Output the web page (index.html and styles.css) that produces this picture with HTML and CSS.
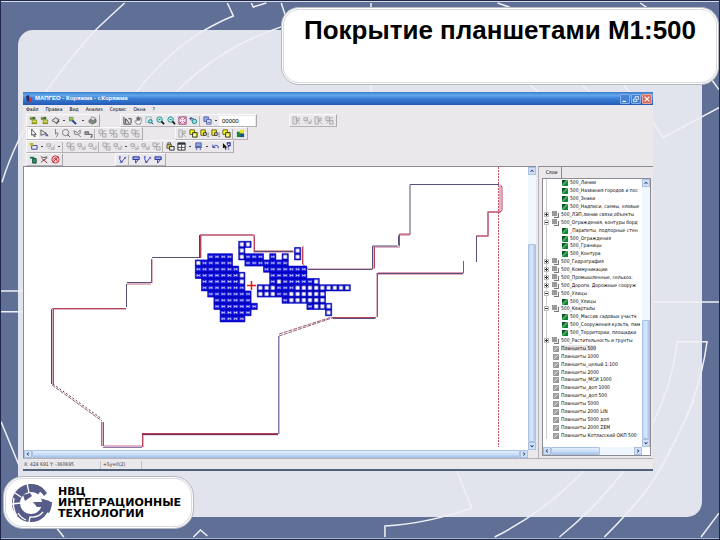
FILE: index.html
```html
<!DOCTYPE html>
<html lang="ru">
<head>
<meta charset="utf-8">
<title>Покрытие планшетами М1:500</title>
<link rel="stylesheet" href="styles.css">
</head>
<body>
<svg width="0" height="0" class="defs" aria-hidden="true">
  <symbol id="i-layers" viewBox="0 0 10 10"><path d="M1 1h6v3H1z" fill="#3f6b32"/><path d="M3 4h6v5H3z" fill="#8a9a1c"/><path d="M4 5h4v2H4z" fill="#e4e07a"/><path d="M1 2h3" stroke="#c9d44a"/></symbol>
  <symbol id="i-box" viewBox="0 0 10 10"><path d="M1 5l4-3 4 2-3 4z" fill="#ddd" stroke="#555"/><path d="M6 8l3-4v2L6 9.500z" fill="#444"/></symbol>
  <symbol id="i-find" viewBox="0 0 10 10"><path d="M1 1h5v5H1z" fill="#6aa05c"/><path d="M2 3h3" stroke="#e4df50"/><path d="M5 5l4 4" stroke="#223a9a" stroke-width="2"/></symbol>
  <symbol id="i-print" viewBox="0 0 10 10"><path d="M1 5l4-3 4 2v3L5 9 1 7z" fill="#888" stroke="#444" stroke-width=".6"/><path d="M4 1l4 1-1 3-4-1z" fill="#eee" stroke="#555" stroke-width=".6"/><path d="M6 7h2" stroke="#3b9a3b"/></symbol>
  <symbol id="i-axis" viewBox="0 0 10 10"><path d="M1 1v8h8M3 8V3l4 5M6 3h3v5" fill="none" stroke="#333"/></symbol>
  <symbol id="i-hand" viewBox="0 0 10 10"><path d="M3 9L1 6l1-1 1 1V2h1v3-4h1v4-3.500h1V5l1-3h1v4L7 9z" fill="#fff" stroke="#555" stroke-width=".7"/></symbol>
  <symbol id="i-zoom" viewBox="0 0 10 10"><circle cx="4" cy="4" r="3" fill="#b9f0ee" stroke="#168a8a"/><path d="M6 6l3 3" stroke="#111" stroke-width="1.700"/><path d="M3 4h2" stroke="#065"/></symbol>
  <symbol id="i-zoomrect" viewBox="0 0 10 10"><path d="M1 1h6v6H1z" fill="none" stroke="#3a9a9a" stroke-dasharray="1 1"/><circle cx="6" cy="6" r="2" fill="#8fe3e0" stroke="#177"/><path d="M7 7l2 2" stroke="#333"/></symbol>
  <symbol id="i-fit" viewBox="0 0 10 10"><path d="M1 1h8v8H1z" fill="#f7e7f7" stroke="#8a2a6a"/><path d="M2 2l2 2M8 2L6 4M2 8l2-2M8 8L6 6" stroke="#b02a4a"/></symbol>
  <symbol id="i-back" viewBox="0 0 10 10"><path d="M1 3h4M1 3l2-2M1 3l2 2" stroke="#238"/><circle cx="6" cy="6" r="2.500" fill="#8fe3e0" stroke="#177"/></symbol>
  <symbol id="i-sheets" viewBox="0 0 10 10"><path d="M1 1h5v5H1z" fill="#9bb0e6" stroke="#4559a0"/><path d="M4 4h5v5H4z" fill="#dfe6fa" stroke="#4559a0"/><path d="M5 7h3" stroke="#4559a0"/></symbol>
  <symbol id="i-gray" viewBox="0 0 10 10"><path d="M1 1h4v8H1zM4 4l4-2v3H5l4 4" fill="#ddd" stroke="#aaa"/></symbol>
  <symbol id="i-grayx" viewBox="0 0 10 10"><path d="M1 1h4v4H1zM5 5h4v4H5zM2 8l5-6M6 2h3" fill="#dddbdd" stroke="#aaa"/></symbol>
  <symbol id="i-grayn" viewBox="0 0 10 10"><path d="M1 2h4v3H1zM4 4l4 4M5 8h4V4M2 7h2" fill="#dddbdd" stroke="#aaa"/></symbol>
  <symbol id="i-cursor" viewBox="0 0 10 10"><path d="M3 0v7l2-1 1 3 1-1-1-2h2z" fill="#fff" stroke="#222" stroke-width=".8"/></symbol>
  <symbol id="i-poly" viewBox="0 0 10 10"><path d="M1 1v6l6-2zM6 4l3 4" fill="none" stroke="#555"/><path d="M6 6h3v2H6z" fill="#5364b5"/></symbol>
  <symbol id="i-pick" viewBox="0 0 10 10"><path d="M5 0v6M5 4l3 1-2 4" fill="none" stroke="#777"/></symbol>
  <symbol id="i-lens" viewBox="0 0 10 10"><circle cx="4" cy="4" r="3.500" fill="none" stroke="#777"/><path d="M6 6l3 3" stroke="#555"/></symbol>
  <symbol id="i-lasso" viewBox="0 0 10 10"><path d="M1 2l4 2 3-3v4l-3 1 4 3M1 2l1 4h3" fill="none" stroke="#777"/></symbol>
  <symbol id="i-rect" viewBox="0 0 10 10"><path d="M1 3h4v3H1z" fill="#999" stroke="#666"/><path d="M5 6h4v3H7" fill="none" stroke="#444"/></symbol>
  <symbol id="i-yellow" viewBox="0 0 10 10"><path d="M1 1h5v5H1z" fill="#ffff20" stroke="#5a5a10"/><path d="M4 4h5v5H4z" fill="#f0ee20" stroke="#222"/><path d="M5 6h2v2H5z" fill="#fff"/></symbol>
  <symbol id="i-yellowdot" viewBox="0 0 10 10"><path d="M1 1h5v6H1z" fill="#f4f020" stroke="#5a5a10"/><path d="M4 4h3v3H4z" fill="#ddd" stroke="#333"/><path d="M9 4v5" stroke="#222" stroke-dasharray="1 1"/></symbol>
  <symbol id="i-green" viewBox="0 0 10 10"><path d="M1 3h6v6H1z" fill="#128a28"/><path d="M4 1h5v4H4z" fill="#e6e21c"/><path d="M5 5h4v4H5z" fill="#1c4a9a"/></symbol>
  <symbol id="i-new" viewBox="0 0 10 10"><path d="M3 4h6v4H3z" fill="#eee" stroke="#2a3c9a"/><path d="M1 1h4v3H1z" fill="#c8b820"/></symbol>
  <symbol id="i-lock" viewBox="0 0 10 10"><path d="M1 3h5v4H1z" fill="#d8cf3a" stroke="#555"/><path d="M4 5h5v4H4z" fill="#eee" stroke="#222"/><path d="M2 3V1h3v2" fill="none" stroke="#444"/></symbol>
  <symbol id="i-table" viewBox="0 0 10 10"><path d="M1 1h8v8H1z" fill="#fff" stroke="#222"/><path d="M1 2h8" stroke="#234" stroke-width="2"/><path d="M1 6h8M5 3v6" stroke="#445"/></symbol>
  <symbol id="i-board" viewBox="0 0 10 10"><path d="M2 1h6v4H2z" fill="#93a7dd" stroke="#4559a0"/><path d="M1 6h8M3 6v3M7 6v3" stroke="#4559a0"/></symbol>
  <symbol id="i-undo" viewBox="0 0 10 10"><path d="M2 6q3-4 6-1v2M2 3v3h3" fill="none" stroke="#2938a8"/></symbol>
  <symbol id="i-help" viewBox="0 0 10 10"><path d="M1 1v6l2-1 1 3 1-1-1-2h2z" fill="#111"/><path d="M6 3V1h3v3H7v2M7 8h1" fill="none" stroke="#1c2aa0" stroke-width="1.300"/></symbol>
  <symbol id="i-db" viewBox="0 0 10 10"><path d="M1 2h5v2H1z" fill="#157a5a"/><path d="M4 4h4v5H4z" fill="#22986c" stroke="#174a34"/></symbol>
  <symbol id="i-cut" viewBox="0 0 10 10"><path d="M1 2l3 1 4-1M1 8l7-5M5 6l3 3" fill="none" stroke="#444"/><path d="M2 4l5 4" stroke="#c02a3a"/></symbol>
  <symbol id="i-no" viewBox="0 0 10 10"><circle cx="5" cy="5" r="4" fill="#f4d4d4" stroke="#c8202c"/><path d="M2 8l6-6M3 5l2-2 2 4" fill="none" stroke="#c8202c"/></symbol>
  <symbol id="i-vec" viewBox="0 0 10 10"><path d="M2 2v3l2 3 3-4 2-1M2 8h3" fill="none" stroke="#2a34b0"/><path d="M1 1h2v2H1zM7 2h2v2H7z" fill="#6a74d8"/></symbol>
  <symbol id="i-vec2" viewBox="0 0 10 10"><path d="M1 2h7v3H1z" fill="#9fa7e8" stroke="#222c8a"/><path d="M4 5v4l4-5" fill="none" stroke="#2a34b0"/></symbol>
  <symbol id="i-up" viewBox="0 0 8 8"><path d="M2 5l2-2 2 2" fill="none" stroke="#33486e" stroke-width="1.400"/></symbol>
  <symbol id="i-down" viewBox="0 0 8 8"><path d="M2 3l2 2 2-2" fill="none" stroke="#33486e" stroke-width="1.400"/></symbol>
  <symbol id="i-left" viewBox="0 0 8 8"><path d="M5 2L3 4l2 2" fill="none" stroke="#33486e" stroke-width="1.400"/></symbol>
  <symbol id="i-right" viewBox="0 0 8 8"><path d="M3 2l2 2-2 2" fill="none" stroke="#33486e" stroke-width="1.400"/></symbol>
</svg>

<main class="slide">
  <section class="panel">
    <svg class="lines" viewBox="0 0 720 540" preserveAspectRatio="none" aria-hidden="true">
      <path d="M124 2Q100 24 93 31Q65 62 45 91Q30 113 18 139Q7 162 1 182M227 2l6 13Q220 20 201 31Q167 52 136 91M281 26Q220 46 175 92M251 2l2 4 13-4M281 2l4 12M371 2v5M371 80v12M498 2l14 5M641 2l7 5M530 84l10 8M582 84l9 8M624 84l7 8M712 78l8 11M652 119l12 18 56-30M652 302h68M653 425Q674 382 678 342H708Q704 372 694 400Q684 430 655 480M695 400Q674 450 653 483Q637 506 605 538M457 471l15 38Q425 525 385 527v11M585 471Q545 513 495 538M625 471Q596 509 560 538M720 514l-18 24M0 291h23M0 312h23M0 422l18 44M55 528l8 10M193 538l7-7 7 6"/>
    </svg>
    <article class="window">
      <header class="titlebar">
        <svg class="app-icon" viewBox="0 0 8 8" aria-hidden="true"><path d="M1 1l3-1v7L2 6z" fill="#26305c"/><path d="M4 2l3 1-1 4-2 1z" fill="#c8323a"/></svg>
        <h2>МАПГЕО - Коряжма - г.Коряжма</h2>
        <button class="caption" aria-label="Свернуть"><svg viewBox="0 0 10 10"><path d="M2 8h4" stroke="#fff" stroke-width="1.500"/></svg></button>
        <button class="caption" aria-label="Восстановить"><svg viewBox="0 0 10 10"><path d="M2 5h4v3H2zM4 4V2h4v4" fill="none" stroke="#fff"/></svg></button>
        <button class="caption close" aria-label="Закрыть"><svg viewBox="0 0 10 10"><path d="M2 2l6 6M8 2L2 8" stroke="#fff" stroke-width="1.500"/></svg></button>
      </header>
      <nav class="menu"><a href="#">Файл</a><a href="#">Правка</a><a href="#">Вид</a><a href="#">Анализ</a><a href="#">Сервис</a><a href="#">Окна</a><a href="#">?</a></nav>

      <div class="toolrow">
        <div class="tools">
          <button aria-label="Слои"><svg><use href="#i-layers"/></svg></button><button aria-label="Набор слоёв"><svg><use href="#i-layers"/></svg></button><button aria-label="Объект"><svg><use href="#i-box"/></svg></button><i class="drop"></i><button aria-label="Поиск"><svg><use href="#i-find"/></svg></button><i class="drop wide"></i><button aria-label="Печать"><svg><use href="#i-print"/></svg></button>
        </div>
        <div class="tools after-s">
          <button aria-label="Оси"><svg><use href="#i-axis"/></svg></button><button aria-label="Рука"><svg><use href="#i-hand"/></svg></button><button aria-label="Рамка"><svg><use href="#i-zoomrect"/></svg></button><button aria-label="Увеличить"><svg><use href="#i-zoom"/></svg></button><button aria-label="Уменьшить"><svg><use href="#i-zoom"/></svg></button><button aria-label="Вся карта"><svg><use href="#i-fit"/></svg></button><button aria-label="Назад"><svg><use href="#i-back"/></svg></button><i class="sep"></i><button aria-label="Листы"><svg><use href="#i-sheets"/></svg></button><i class="drop"></i><input class="code" aria-label="Код" value="00000">
        </div>
        <div class="tools after-m">
          <button aria-label="Узел"><svg><use href="#i-gray"/></svg></button><button aria-label="Линия"><svg><use href="#i-grayn"/></svg></button><button aria-label="Точка"><svg><use href="#i-gray"/></svg></button><button aria-label="Сетка"><svg><use href="#i-grayx"/></svg></button>
        </div>
      </div>
      <div class="toolrow">
        <div class="tools">
          <button class="on" aria-label="Курсор"><svg><use href="#i-cursor"/></svg></button><button aria-label="Полигон"><svg><use href="#i-poly"/></svg></button><button aria-label="Указать"><svg><use href="#i-pick"/></svg></button><button aria-label="Круг"><svg><use href="#i-lens"/></svg></button><button aria-label="Лассо"><svg><use href="#i-lasso"/></svg></button><button aria-label="Прямоугольник"><svg><use href="#i-rect"/></svg></button><i class="sep"></i><button aria-label="Вырезать"><svg><use href="#i-grayx"/></svg></button><button aria-label="Копировать"><svg><use href="#i-grayx"/></svg></button><button aria-label="Вставить"><svg><use href="#i-grayx"/></svg></button><button aria-label="Удалить"><svg><use href="#i-grayx"/></svg></button>
        </div>
        <div class="tools after-m">
          <button aria-label="Снять"><svg><use href="#i-gray"/></svg></button><button aria-label="Объединить"><svg><use href="#i-yellow"/></svg></button><button aria-label="Вычесть"><svg><use href="#i-yellowdot"/></svg></button><button aria-label="Пересечь"><svg><use href="#i-yellowdot"/></svg></button><button aria-label="Разделить"><svg><use href="#i-yellow"/></svg></button><i class="sep"></i><button aria-label="Карта"><svg><use href="#i-green"/></svg></button>
        </div>
      </div>
      <div class="toolrow">
        <div class="tools">
          <button aria-label="Создать"><svg><use href="#i-new"/></svg></button><i class="drop"></i><button aria-label="Правка"><svg><use href="#i-grayn"/></svg></button><i class="drop"></i><i class="sep"></i><button aria-label="Сдвиг"><svg><use href="#i-grayx"/></svg></button><button aria-label="Поворот"><svg><use href="#i-grayn"/></svg></button><button aria-label="Масштаб"><svg><use href="#i-grayn"/></svg></button><i class="sep"></i><button aria-label="Узлы"><svg><use href="#i-grayx"/></svg></button><button aria-label="Дуга"><svg><use href="#i-grayn"/></svg></button><i class="drop"></i><button aria-label="Точки"><svg><use href="#i-grayn"/></svg></button><button aria-label="Отрезки"><svg><use href="#i-grayn"/></svg></button><button aria-label="Связи"><svg><use href="#i-grayx"/></svg></button><i class="sep"></i><button aria-label="Блокировка"><svg><use href="#i-lock"/></svg></button><button aria-label="Таблица"><svg><use href="#i-table"/></svg></button><i class="drop"></i><button aria-label="Доска"><svg><use href="#i-board"/></svg></button><i class="drop"></i><button aria-label="Отменить"><svg><use href="#i-undo"/></svg></button><button aria-label="Справка"><svg><use href="#i-help"/></svg></button>
        </div>
      </div>
      <div class="toolrow">
        <div class="tools">
          <button aria-label="База"><svg><use href="#i-db"/></svg></button><button aria-label="Разрыв"><svg><use href="#i-cut"/></svg></button><button aria-label="Запрет"><svg><use href="#i-no"/></svg></button>
        </div>
        <div class="tools after-l">
          <button aria-label="Вектор"><svg><use href="#i-vec"/></svg></button><i class="sep"></i><button aria-label="Вектор слоя"><svg><use href="#i-vec2"/></svg></button><button aria-label="Вектор линии"><svg><use href="#i-vec"/></svg></button><button aria-label="Вектор области"><svg><use href="#i-vec2"/></svg></button>
        </div>
      </div>

      <div class="work">
        <div class="view">
          <svg class="map" viewBox="24 167 504 283" role="img" aria-label="Карта города">
            <defs>
              <pattern id="full" width="10" height="10" patternUnits="userSpaceOnUse"><path d="M0 0h10v10H0z" fill="#0808d8"/><path d="M3 3v4M7 3v4M3 5h4" stroke="#d0d0ff" stroke-width="1.500" fill="none"/></pattern>
              <pattern id="open" width="10" height="10" patternUnits="userSpaceOnUse"><path d="M0 0h10v10H0z" fill="#0808c8"/><path d="M2 2h6v6H2z" fill="#fbfbee"/></pattern>
            </defs>
            <g fill="none">
              <path stroke="#dfb4c4" stroke-width="2" d="M53 385V309H126M127 284h24M152 283v-24M201 258v-23h53v17h40M303 246v18M308 269h65M374 269v-22h25v-12h11M377 317V274h86M500 186v26h-12v24h-11M332 318h44M279 434V336M142 434.500h136M143 435v12M104 446h38M103 446V422"/>
              <path stroke="#b84058" d="M52.500 308.500H126M151.500 283v-24M200.500 258v-23h52q2 0 2 2v14h39M302.500 247v17l5 5M374.500 268v-21M399.500 246v-12h11M500 184.500q2 1 2 4v22l-2 1.500h-12v24h-12M463.500 261v12H378M377.500 273v44M332 317.500h44M53.500 309v75M142 433.500h136M142.500 435v12M103.500 422v24"/>
              <path stroke="#56507c" d="M126.500 284v23M127 282.500h24M152 257.500h48M308 269.500h64M372.500 269v-23h25M398.500 245v-9M410 234v-49.500h89M476.500 236v26M254 251.500h39M463 273.500h-86M375 318.500h-42"/>
              <path stroke="#713058" d="M51.500 309v75M199.500 258v-23M142 434.500h136"/>
              <path stroke="#8a78ae" d="M278.500 434V336M101.500 446V422M103 447.500h39"/>
              <path stroke="#986078" stroke-dasharray="4 1" d="M279 336l53-18M279 334l53-17M52 385l50 36"/>
              <path stroke="#553858" stroke-dasharray="2 2" d="M53 384l49 35"/>
              <path stroke="#c85068" stroke-dasharray="2 1" d="M498.500 167v280"/>
            </g>
            <g transform="translate(195.300 241.300) scale(.62)">
              <path fill="url(#full)" stroke="#0000b4" d="M20 20h40v10h-40zM80 20h30v10h-30zM120 20h10v10h-10zM10 30h50v10h-50zM80 30h70v10h-70zM0 40h70v10h-70zM110 40h70v10h-70zM0 50h70v10h-70zM120 50h60v10h-60zM10 60h60v10h-60zM120 60h70v10h-70zM10 70h70v10h-70zM130 70h30v10h-30zM20 80h70v10h-70zM130 80h20v10h-20zM30 90h60v10h-60zM140 90h10v10h-10zM30 100h70v10h-70zM180 100h10v10h-10zM40 110h50v10h-50zM40 120h40v10h-40z"/>
              <path fill="url(#open)" stroke="#0000b4" d="M70 0h20v10h-20zM70 10h10v20h-10zM160 10h10v20h-10zM140 20h10v10h-10zM0 30h10v10h-10zM70 50h10v20h-10zM130 60h10v10h-10zM190 60h10v10h-10zM100 70h30v20h-30zM160 70h90v10h-90zM150 80h60v10h-60zM150 90h60v10h-60zM190 100h30v10h-30zM210 110h10v10h-10z"/>
            </g>
            <path d="M247 285.500h9M251.500 281v9" stroke="#e01818" stroke-width="1.500"/>
          </svg>
          <div class="bar v map-v"><button aria-label="Вверх"><svg><use href="#i-up"/></svg></button><span class="thumb"></span><button aria-label="Вниз"><svg><use href="#i-down"/></svg></button></div>
          <div class="bar h map-h"><button aria-label="Влево"><svg><use href="#i-left"/></svg></button><span class="thumb"></span><button aria-label="Вправо"><svg><use href="#i-right"/></svg></button></div>
        </div>
        <aside class="side">
          <button class="tab">Слои</button>
          <div class="treebox">
            <ul class="tree">
              <li class="leaf">500_Линии</li>
              <li class="leaf">500_Названия городов и пос</li>
              <li class="leaf">500_Знаки</li>
              <li class="leaf">500_Надписи, схемы, еловые</li>
              <li class="group">500_ЛЭП,линии связи,объекты</li>
              <li class="group open">500_Ограждения, контуры борд</li>
              <li class="leaf">_Парапеты, подпорные стен</li>
              <li class="leaf">500_Ограждения</li>
              <li class="leaf">500_Границы</li>
              <li class="leaf">500_Контура</li>
              <li class="group">500_Гидрография</li>
              <li class="group">500_Коммуникации</li>
              <li class="group">500_Промышленные, сельхоз.</li>
              <li class="group">500_Дороги. Дорожные сооруж</li>
              <li class="group open">500_Улицы</li>
              <li class="leaf">500_Улицы</li>
              <li class="group open">500_Кварталы</li>
              <li class="leaf">500_Массив садовых участк</li>
              <li class="leaf">500_Сооружения культа, пам</li>
              <li class="leaf">500_Территории, площадки</li>
              <li class="group">500_Растительность и грунты</li>
              <li class="sheet"><mark>Планшеты 500</mark></li>
              <li class="sheet">Планшеты 1000</li>
              <li class="sheet">Планшеты_целый 1:100</li>
              <li class="sheet">Планшеты 2000</li>
              <li class="sheet">Планшеты_МСИ 1000</li>
              <li class="sheet">Планшеты_доп 1000</li>
              <li class="sheet">Планшеты_доп 500</li>
              <li class="sheet">Планшеты 5000</li>
              <li class="sheet">Планшеты 2000 LIN</li>
              <li class="sheet">Планшеты 5000 доп</li>
              <li class="sheet">Планшеты 2000 ZEM</li>
              <li class="sheet">Планшеты Котласский ОКП 500</li>
            </ul>
            <div class="bar v tree-v"><button aria-label="Вверх"><svg><use href="#i-up"/></svg></button><span class="thumb"></span><button aria-label="Вниз"><svg><use href="#i-down"/></svg></button></div>
            <div class="bar h tree-h"><button aria-label="Влево"><svg><use href="#i-left"/></svg></button><span class="thumb"></span><button aria-label="Вправо"><svg><use href="#i-right"/></svg></button></div>
          </div>
        </aside>
      </div>
      <footer class="status"><span>X: 424 691 Y: -360695</span><span>+Sy=0(2)</span></footer>
    </article>
  </section>

  <header class="card title"><h1>Покрытие планшетами М1:500</h1></header>
  <footer class="card brand">
    <svg class="logo" viewBox="0 0 42 40" aria-hidden="true">
      <circle cx="20" cy="20" r="15" fill="none" stroke="#565b87" stroke-width="8"/>
      <path d="M33 4L25 14l17 5V6z" fill="#fff"/>
      <path d="M26 2q6 2 10 8l-3 3q-3-5-8-6z" fill="#565b87"/>
      <path d="M22 19h19q0 6-3 11l-8-3q1-2 1-3h-5z" fill="#565b87"/>
      <path d="M12 12l7-2 2 3-7 5z" fill="#565b87"/>
      <path d="M4 10l6 4M16 0l2 10M0 21l10-1M6 33q-5-8-3-18M18 39l1-5q8 1 13-5M15 37q-5-2-8-7" fill="none" stroke="#fff" stroke-width="1.300"/>
    </svg>
    <p>НВЦ<br>ИНТЕГРАЦИОННЫЕ<br>ТЕХНОЛОГИИ</p>
  </footer>
</main>
</body>
</html>
```
FILE: styles.css
```css
*, *::before, *::after { box-sizing: border-box; }

body {
  margin: 0;
  font-family: "Liberation Sans", Arial, sans-serif;
  color: #000;
}

h1, h2, p, ul { margin: 0; padding: 0; }
button { padding: 0; border: 0; background: none; font: inherit; color: inherit; }
svg { display: block; }
.defs { position: absolute; }

.slide {
  position: relative;
  min-height: 100vh;
  padding: 29px 17px 22px;
  background: #5f6f96;
  border: 1px solid #20294c;
  box-shadow: inset 0 1px #d8dbe6, inset 0 -1px #aab2c8;
}

.lines { position: absolute; inset: 0; width: 100%; height: 100%; }
.lines path { fill: none; stroke: #f0f1f6; stroke-width: 1.5; }

.panel {
  padding: 62px 49px 46px 5px;
  border-radius: 15px 0 15px 0;
  background: #e2e4ed;
}

/* application window */
.window {
  position: relative;
  background: #ebe8ec;
  border-bottom: 2px solid #51617a;
  font: 5px/7px "DejaVu Sans Condensed", "DejaVu Sans", sans-serif;
}

.titlebar {
  display: flex;
  align-items: center;
  gap: 1px;
  height: 13px;
  padding: 0 1px 0 2px;
  background: linear-gradient(#3c7cc8, #62a8ee 25%, #3b7fd6 50%, #2358b4);
  color: #fff;
}
.titlebar h2 { flex: 1; padding-left: 1px; font: 700 6px/9px "Liberation Sans", Arial, sans-serif; white-space: nowrap; }
.app-icon { width: 8px; height: 8px; }
.caption { width: 10px; height: 10px; background: #4683d4; border: 1px solid #82b0e8; border-radius: 1px; }
.caption.close { background: #d96a5c; border-color: #e9a79c; }

.menu { display: flex; gap: 7px; height: 9px; padding: 1px 3px; }
.menu a { color: #000; text-decoration: none; }

.toolrow { display: flex; height: 13px; padding: 0 3px; }
.tools {
  display: flex;
  align-items: center;
  padding: 0 1px;
  border: 1px solid;
  border-color: #fafafa #aaa8ac #b4b2b6 #fafafa;
}
.tools button { width: 11px; height: 10px; padding: 0 1px; }
.tools button.on { background: #fafafa; }
.tools svg { width: 9px; height: 9px; }
.after-s { margin-left: 20px; }
.after-m { margin-left: 32px; }
.after-l { margin-left: 52px; }
.sep { width: 3px; height: 10px; border-left: 1px solid #b5b3b7; }
.drop { width: 6px; height: 1px; border: solid transparent; border-width: 0 2px; background: #444 content-box; }
.drop.wide { width: 9px; border-width: 0 3px 0 4px; }
.code {
  width: 36px;
  height: 10px;
  padding: 0 3px;
  border: 0;
  background: #fff;
  font: 6px/8px "Liberation Sans", Arial, sans-serif;
}

.work {
  display: grid;
  grid-template-columns: 1fr 115px;
  gap: 2px;
  border-bottom: 1px solid #b4b2b8;
}
.view {
  display: grid;
  grid-template-columns: 1fr 8px;
  grid-template-rows: auto 8px;
  border-top: 1px solid #8c8a92;
  border-left: 1px solid #8c8a92;
}
.map { width: 100%; height: auto; background: #fff; }

.bar { display: flex; background: #f0f6fe; }
.bar.v { flex-direction: column; }
.bar button { flex: none; width: 8px; height: 8px; background: #cfe0f8; border: 1px solid #a9c0e2; }
.bar button svg { width: 100%; height: 100%; }
.thumb { flex: 1; background: linear-gradient(90deg, #c3d9f5, #d9e9fc, #adc6e8); border: 1px solid #a9c2e4; border-radius: 1px; }
.bar.h .thumb { background: linear-gradient(#e2effd, #c6dcf6 60%, #a9c4e8); }
.map-v .thumb { margin-top: 69px; }
.tree-v .thumb { margin-top: 133px; }
.tree-h .thumb { margin-right: 34px; }

.side { display: flex; flex-direction: column; padding: 0 2px 2px 3px; border-top: 1px solid #8c8a92; border-left: 1px solid #b4b2b8; }
.tab { align-self: flex-start; width: 20px; height: 11px; border-right: 1px solid #8c8a92; text-align: center; }
.treebox {
  flex: 1;
  display: grid;
  grid-template-columns: minmax(0, 1fr) 8px;
  grid-template-rows: 1fr 8px;
  border: 1px solid #8c8a92;
  background: #fff;
}
.tree {
  display: grid;
  grid-auto-rows: 1fr;
  align-items: center;
  padding-bottom: 8px;
  overflow: hidden;
  list-style: none;
  background: linear-gradient(#ccc, #ccc) 3px 0 / 1px 97% no-repeat;
}
.tree li { position: relative; padding-left: 18px; white-space: nowrap; }
.tree .leaf { padding-left: 27px; }
.tree li::before { content: ""; position: absolute; }
.leaf::before {
  left: 19px; top: 1px; width: 6px; height: 6px;
  background: linear-gradient(135deg, #0f4f28 30%, #55c470 45%, #15803a 65%);
}
.sheet::before {
  left: 10px; top: 1px; width: 6px; height: 6px;
  border: 1px solid #999;
  background: linear-gradient(135deg, #aaa 40%, #ddd 50%, #999 60%);
}
.group::before {
  left: 9px; top: 0; width: 5px; height: 5px;
  background: #999;
  box-shadow: 1px 1px #eee, 2px 2px #777;
}
.group::after {
  content: "";
  position: absolute; left: 1px; top: 1px; width: 5px; height: 5px;
  border: 1px solid #bbb;
  background: linear-gradient(#333, #333) 50% 50% / 3px 1px no-repeat, linear-gradient(#333, #333) 50% 50% / 1px 3px no-repeat, #fff;
}
.group.open::after { background: linear-gradient(#333, #333) 50% 50% / 3px 1px no-repeat, #fff; }
.tree mark { background: #e5e3e7; color: inherit; }

.status { display: flex; height: 10px; padding-top: 2px; color: #333; }
.status span { padding-left: 1px; border-right: 1px solid #c4c2c6; }
.status span:first-child { width: 78px; }
.status span:last-child { width: 41px; padding-left: 2px; }

/* rounded cards over the panel */
.card {
  position: absolute;
  border: 1px solid #b6b8c0;
  background: #fff;
  box-shadow: inset 0 0 0 1px #fff, inset 0 0 0 2px #d8dae0;
}
.title {
  top: 6px;
  right: 0;
  width: 438px;
  height: 78px;
  padding: 7px 22px;
  border-radius: 18px;
}
.title h1 { font-size: 26px; line-height: 30px; color: #000; white-space: nowrap; }
.brand {
  left: 2px;
  bottom: 10px;
  display: flex;
  align-items: center;
  gap: 5px;
  width: 191px;
  height: 53px;
  padding: 0 7px;
  border-radius: 20px;
}
.logo { flex: none; width: 42px; height: 40px; }
.brand p { font: 700 11px/11px "DejaVu Sans", sans-serif; color: #000; white-space: nowrap; }
```
